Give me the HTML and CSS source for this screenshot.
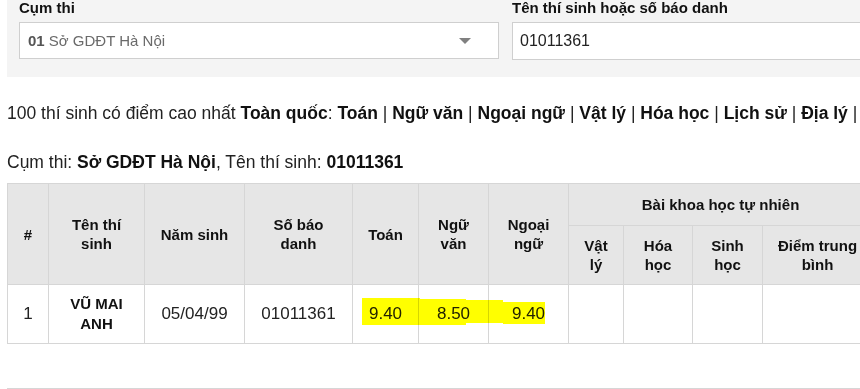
FILE: index.html
```html
<!DOCTYPE html>
<html lang="vi">
<head>
  <meta charset="UTF-8">
  <title>Tra cứu điểm thi</title>
  <link rel="stylesheet" href="styles.css">
</head>
<body>

  <!-- Search panel -->
  <section class="search-panel">
    <div class="field">
      <label class="field-label">Cụm thi</label>
      <div class="select-box">
        <span class="select-text"><b>01</b> Sở GDĐT Hà Nội</span>
        <span class="select-arrow"></span>
      </div>
    </div>
    <div class="field">
      <label class="field-label">Tên thí sinh hoặc số báo danh</label>
      <div class="text-input">01011361</div>
    </div>
  </section>

  <p class="top-links">100 thí sinh có điểm cao nhất <a href="#">Toàn quốc</a>: <a href="#">Toán</a> | <a href="#">Ngữ văn</a> | <a href="#">Ngoại ngữ</a> | <a href="#">Vật lý</a> | <a href="#">Hóa học</a> | <a href="#">Lịch sử</a> | <a href="#">Địa lý</a> |</p>

  <p class="result-title">Cụm thi: <b>Sở GDĐT Hà Nội</b>, Tên thí sinh: <b>01011361</b></p>

  <!-- Results -->
  <div class="result-wrap">
    <table class="result-table">
      <colgroup>
        <col class="c-num"><col class="c-name"><col class="c-birth"><col class="c-sbd">
        <col class="c-math"><col class="c-lit"><col class="c-lang">
        <col class="c-phy"><col class="c-chem"><col class="c-bio"><col class="c-avg">
      </colgroup>
      <thead>
        <tr class="head-top">
          <th rowspan="2">#</th>
          <th rowspan="2">Tên thí sinh</th>
          <th rowspan="2">Năm sinh</th>
          <th rowspan="2">Số báo danh</th>
          <th rowspan="2">Toán</th>
          <th rowspan="2">Ngữ văn</th>
          <th rowspan="2">Ngoại ngữ</th>
          <th colspan="4">Bài khoa học tự nhiên</th>
        </tr>
        <tr class="head-sub">
          <th>Vật lý</th>
          <th>Hóa học</th>
          <th>Sinh học</th>
          <th>Điểm trung bình</th>
        </tr>
      </thead>
      <tbody>
        <tr>
          <td>1</td>
          <td class="name">VŨ MAI ANH</td>
          <td>05/04/99</td>
          <td>01011361</td>
          <td>9.40</td>
          <td>8.50</td>
          <td>9.40</td>
          <td></td>
          <td></td>
          <td></td>
          <td></td>
        </tr>
      </tbody>
    </table>

    <!-- marker highlight drawn over the scores -->
    <div class="marker">
      <span class="m1"></span>
      <span class="m2"></span>
      <span class="m3"></span>
      <span class="m4"></span>
    </div>
  </div>

  <div class="bottom-rule"></div>

</body>
</html>
```

FILE: styles.css
```css
/* Global */
* {
  margin: 0;
  padding: 0;
  box-sizing: border-box;
}

body {
  font-family: 'Liberation Sans', Arial, sans-serif;
  color: #222;
  background: #fff;
  padding-left: 7px;
  overflow: hidden;
  width: 860px;
}

a {
  color: #111;
  font-weight: bold;
  text-decoration: none;
}

/* Search panel */
.search-panel {
  display: grid;
  grid-template-columns: 480px 480px;
  column-gap: 13px;
  background-color: #f4f4f4;
  padding: 0 12px 18px;
  height: 77px;
  width: 1000px;
}

.field-label {
  display: block;
  font-size: 15px;
  font-weight: bold;
  line-height: 15px;
  margin-bottom: 7px;
  color: #111;
}

.select-box {
  display: flex;
  align-items: center;
  justify-content: space-between;
  height: 37px;
  padding: 0 27px 0 8px;
  background: #fff;
  border: 1px solid #cfcfcf;
  font-size: 15px;
  color: #6a6a6a;
}

.select-box b {
  color: #555;
}

.select-arrow {
  width: 0;
  height: 0;
  border-left: 6px solid transparent;
  border-right: 6px solid transparent;
  border-top: 6px solid #808080;
}

.text-input {
  display: flex;
  align-items: center;
  height: 38px;
  padding: 0 7px;
  background: #fff;
  border: 1px solid #cfcfcf;
  font-size: 16px;
  color: #222;
}

/* Info lines */
.top-links {
  font-size: 17.5px;
  line-height: 24px;
  margin-top: 24px;
  white-space: nowrap;
}

.result-title {
  font-size: 17.5px;
  line-height: 24px;
  margin-top: 25px;
}

.result-title b {
  color: #111;
}

/* Table */
.result-wrap {
  position: relative;
  margin-top: 9px;
}

.result-table {
  border-collapse: collapse;
  table-layout: fixed;
  width: 865px;
  border: 1px solid #d6d6d6;
}

.c-num { width: 41px; }
.c-name { width: 96px; }
.c-birth { width: 100px; }
.c-sbd { width: 108px; }
.c-math { width: 66px; }
.c-lit { width: 70px; }
.c-lang { width: 80px; }
.c-phy { width: 55px; }
.c-chem { width: 69px; }
.c-bio { width: 70px; }
.c-avg { width: 110px; }

.result-table th,
.result-table td {
  border: 1px solid #d6d6d6;
  text-align: center;
  vertical-align: middle;
  padding: 0 10px;
}

.result-table th {
  background-color: #e6e6e6;
  font-size: 15px;
  line-height: 19px;
  color: #111;
}

.head-top {
  height: 42px;
}

.head-sub {
  height: 59px;
}

.result-table td {
  height: 59px;
  font-size: 17px;
  line-height: 20px;
}

.result-table td.name {
  font-size: 15px;
  font-weight: bold;
  color: #111;
}

/* Yellow marker over the scores */
.marker span {
  position: absolute;
  background-color: #ffff00;
  mix-blend-mode: multiply;
}

.marker .m1 { left: 355px; top: 115px; width: 58px; height: 27px; }
.marker .m2 { left: 411px; top: 116px; width: 48px; height: 26px; }
.marker .m3 { left: 459px; top: 117px; width: 37px; height: 23px; }
.marker .m4 { left: 496px; top: 119px; width: 42px; height: 22px; }

.bottom-rule {
  margin-top: 44px;
  border-top: 1px solid #d6d6d6;
  width: 870px;
}
```
